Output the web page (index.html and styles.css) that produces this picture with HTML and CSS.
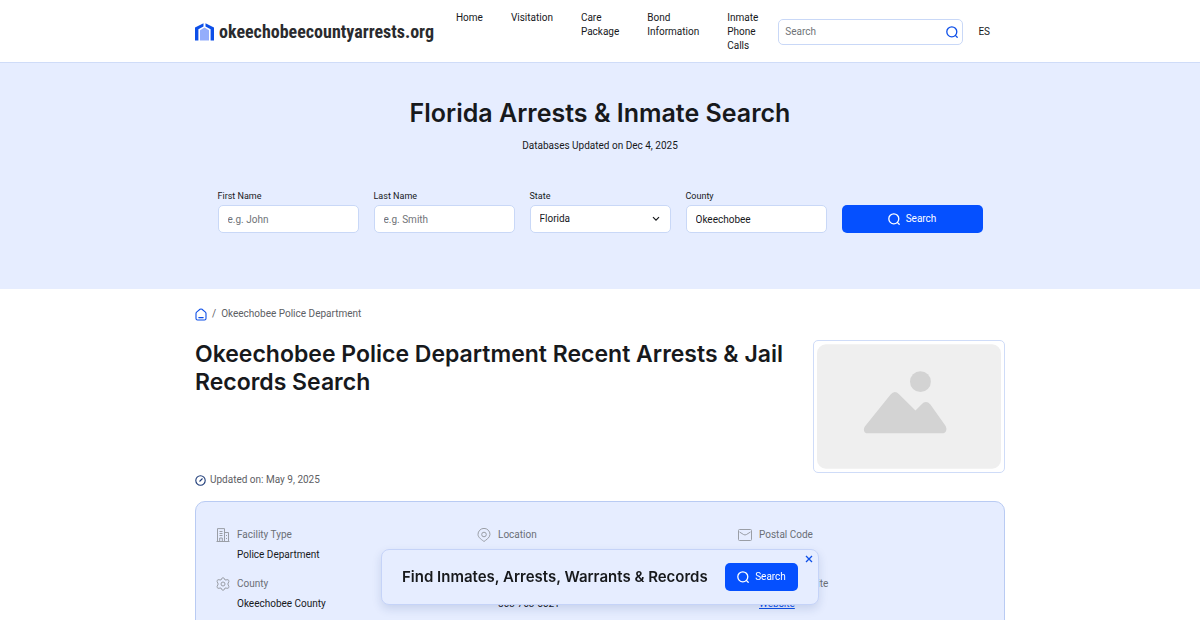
FILE: index.html
```html
<!DOCTYPE html>
<html lang="en">
<head>
    <meta charset="UTF-8">
    <meta name="viewport" content="width=device-width, initial-scale=1.0">
    <title>Okeechobee Police Department Recent Arrests &amp; Jail Records Search</title>
    <link rel="stylesheet" href="styles.css">
</head>
<body>
    <svg class="sprite" aria-hidden="true">
        <symbol id="icon-search" viewBox="0 0 12 12">
            <path d="M9.4 9.4 11.2 11.2M10.8 5.8A5 5 0 1 1 .8 5.8a5 5 0 0 1 10 0Z" fill="none" stroke="currentColor" stroke-width="1.3" stroke-linecap="round"/>
        </symbol>
    </svg>

    <header class="header">
        <div class="container header-inner">
            <a class="logo" href="#">
                <svg class="logo-icon" viewBox="0 0 19 18">
                    <path d="M0 4.5 8.5.3v3.3L3.4 6.3V17.5H0ZM19 4.5 10.5.3v3.3l5.1 2.7v11.2H19Z" fill="#0d4fe8"/>
                    <path d="M5 7.3 9.5 4.5 14 7.3v10.2H5Z" fill="#94adfb"/>
                </svg>
                <span>okeechobeecountyarrests.org</span>
            </a>
            <nav>
                <ul class="nav-list">
                    <li><a href="#">Home</a></li>
                    <li><a href="#">Visitation</a></li>
                    <li><a href="#">Care Package</a></li>
                    <li><a href="#">Bond Information</a></li>
                    <li><a href="#">Inmate Phone Calls</a></li>
                </ul>
            </nav>
            <form class="site-search">
                <input type="text" placeholder="Search" aria-label="Search">
                <button type="submit" aria-label="Search"><svg class="icon-search"><use href="#icon-search"/></svg></button>
            </form>
            <a class="lang" href="#">ES</a>
        </div>
    </header>

    <section class="hero">
        <h2>Florida Arrests &amp; Inmate Search</h2>
        <p>Databases Updated on Dec 4, 2025</p>
        <form class="search-form">
            <div class="field">
                <label for="firstName">First Name</label>
                <input type="text" id="firstName" placeholder="e.g. John">
            </div>
            <div class="field">
                <label for="lastName">Last Name</label>
                <input type="text" id="lastName" placeholder="e.g. Smith">
            </div>
            <div class="field">
                <label for="state">State</label>
                <div class="select-wrap">
                    <select id="state">
                        <option>Florida</option>
                    </select>
                    <svg class="chevron" viewBox="0 0 8 6"><path d="m1 1.2 3 3 3-3" fill="none" stroke="currentColor" stroke-width="1.2"/></svg>
                </div>
            </div>
            <div class="field">
                <label for="county">County</label>
                <input type="text" id="county" value="Okeechobee">
            </div>
            <button class="btn" type="submit"><svg class="icon-search"><use href="#icon-search"/></svg>Search</button>
        </form>
    </section>

    <main class="container">
        <nav class="breadcrumbs" aria-label="Breadcrumb">
            <a href="#" aria-label="Home">
                <svg viewBox="0 0 12 13"><path d="M1 5.4Q1 4.6 1.6 4.1L5 1.3Q6 .6 7 1.3l3.4 2.8q.6.5.6 1.3v5.1Q11 12 9.5 12h-7Q1 12 1 10.5ZM3.8 9.6h4.4" fill="none" stroke="currentColor" stroke-width="1.1" stroke-linecap="round"/></svg>
            </a>
            <span>/</span>
            <span>Okeechobee Police Department</span>
        </nav>

        <div class="facility">
            <div class="facility-text">
                <h1>Okeechobee Police Department Recent Arrests &amp; Jail Records Search</h1>
                <p class="updated">
                    <svg viewBox="0 0 11 11"><circle cx="5.5" cy="5.5" r="4.7"/><path d="M4.5 6.5 7.5 3.5"/></svg>
                    Updated on: May 9, 2025
                </p>
            </div>
            <div class="photo">
                <svg viewBox="0 0 185 125" role="img" aria-label="No photo">
                    <rect width="185" height="125" rx="9" fill="#efefef"/>
                    <circle cx="104" cy="37.5" r="10.5" fill="#d3d3d3"/>
                    <path d="M51 89.5C47 89.5 46 85 48.5 82L74 50.5Q78 45.5 82.5 50.3L99 66.5 105 60.5Q109.5 55.5 114 60.5L129 81.5C131.5 85.5 129.5 89.5 126 89.5Z" fill="#d3d3d3"/>
                </svg>
            </div>
        </div>

        <dl class="details">
            <div class="detail">
                <svg class="detail-icon" viewBox="0 0 14 14"><path d="M.5 13.5h13M1.500 13.500V.6h7v12.9M8.500 4.500h4v9M3.500 3.500h3M3.500 5.500h3M3.500 7.500h3M3.700 13.500V10h2.600v3.500M10.500 7v1M10.500 10v1"/></svg>
                <dt>Facility Type</dt>
                <dd>Police Department</dd>
            </div>
            <div class="detail">
                <svg class="detail-icon" viewBox="0 0 14 14"><path d="M7 13.5C5.5 12.2 1 9.8 1 6.4a6 6 0 0 1 12 0c0 3.4-4.5 5.8-6 7.1Z"/><circle cx="7" cy="6.5" r="2.3"/></svg>
                <dt>Location</dt>
                <dd>Okeechobee</dd>
            </div>
            <div class="detail">
                <svg class="detail-icon" viewBox="0 0 14 14"><rect x=".5" y="1.5" width="13" height="11" rx="1"/><path d="m1.500 4 4.200 2.600q1.300.7 2.600 0L12.500 4"/></svg>
                <dt>Postal Code</dt>
                <dd>34974</dd>
            </div>
            <div class="detail">
                <svg class="detail-icon" viewBox="0 0 14 14"><path d="M7 .7Q8 .7 8.500 2L9 3l3-.3q1.200.6.9 1.800L11.800 7l1.100 2.500q.3 1.200-.9 1.800L9 11l-.5 1q-.5 1.300-1.500 1.300T5.500 12L5 11l-3 .3Q.8 10.700 1.100 9.500L2.200 7 1.100 4.500Q.8 3.300 2 2.700L5 3l.5-1Q6 .7 7 .7Z"/><circle cx="7" cy="7" r="2"/></svg>
                <dt>County</dt>
                <dd>Okeechobee County</dd>
            </div>
            <div class="detail">
                <svg class="detail-icon" viewBox="0 0 14 14"><path d="M2 1.500h2.500l1.200 3-1.500 1.200a8 8 0 0 0 4 4l1.300-1.500 3 1.300V12q-.3 1-1.500 1C6 13 1 8 1 3q0-1.200 1-1.500Z"/></svg>
                <dt>Phone</dt>
                <dd>863-763-5521</dd>
            </div>
            <div class="detail">
                <svg class="detail-icon" viewBox="0 0 14 14"><circle cx="7" cy="7" r="6"/><path d="M1 7h12M7 1q-5 6 0 12 5-6 0-12"/></svg>
                <dt>Official Website</dt>
                <dd><a href="#">Website</a></dd>
            </div>
        </dl>
    </main>

    <aside class="popup">
        <p>Find Inmates, Arrests, Warrants &amp; Records</p>
        <button class="btn" type="button"><svg class="icon-search"><use href="#icon-search"/></svg>Search</button>
        <button class="popup-close" type="button" aria-label="Close">
            <svg viewBox="0 0 8 8"><path d="m1 1 6 6M7 1 1 7" fill="none" stroke="currentColor" stroke-width="1.3"/></svg>
        </button>
    </aside>
</body>
</html>
```
FILE: styles.css
```css
* {
    margin: 0;
    padding: 0;
    box-sizing: border-box;
}

body {
    font-family: Roboto, "Liberation Sans", sans-serif;
    font-size: 10px;
    line-height: 14px;
    color: #17191c;
    background: #fff;
    overflow: hidden;
}

a {
    color: inherit;
    text-decoration: none;
}

input,
select,
button {
    font: inherit;
    color: inherit;
}

svg {
    display: block;
    flex: none;
}

.sprite {
    position: absolute;
    width: 0;
    height: 0;
}

.container {
    max-width: 810px;
    margin: 0 auto;
}

.icon-search {
    width: 12px;
    height: 12px;
}

h1,
h2,
.popup p {
    font-family: Inter, "Liberation Sans", sans-serif;
    font-weight: 600;
}

/* Header */
.header {
    border-bottom: 1px solid #cfdcf8;
}

.header-inner {
    display: flex;
    align-items: center;
    padding: 11px 0 9px;
}

.logo {
    display: flex;
    align-items: center;
    gap: 5px;
    margin-right: 22px;
    color: #2a2b2e;
    font-family: "Roboto Condensed", "Liberation Sans Narrow", "Liberation Sans", sans-serif;
    font-size: 18px;
    font-weight: 700;
    line-height: 24px;
}

.logo-icon {
    width: 19px;
    height: 18px;
}

.header nav {
    align-self: flex-start;
}

.nav-list {
    display: flex;
    gap: 28px;
    list-style: none;
}

.nav-list li {
    width: min-content;
}

.site-search {
    display: flex;
    align-items: center;
    flex: 1;
    height: 26px;
    margin: 0 15px 0 20px;
    padding: 0 4px 0 6px;
    border: 1px solid #c9d8f7;
    border-radius: 5px;
}

.site-search input {
    flex: 1;
    min-width: 0;
    border: 0;
    outline: 0;
    background: none;
}

.site-search button {
    border: 0;
    background: none;
    color: #0d4fe8;
}

.lang {
    margin-right: 15px;
}

/* Search block */
.hero {
    padding: 33px 20px 56px;
    background: #e6edff;
    text-align: center;
}

.hero h2 {
    font-size: 25px;
    line-height: 34px;
}

.hero p {
    margin: 9px 0 36px;
}

.search-form {
    display: flex;
    align-items: flex-end;
    gap: 15px;
    max-width: 765px;
    margin: 0 auto;
    text-align: left;
}

.field,
.search-form .btn {
    flex: 1;
    min-width: 0;
}

.field label {
    display: block;
    margin-bottom: 2px;
    font-size: 9px;
}

.field input,
.field select {
    display: block;
    width: 100%;
    height: 28px;
    padding: 0 9px;
    border: 1px solid #c9d8f7;
    border-radius: 5px;
    background: #fff;
    appearance: none;
}

::placeholder {
    color: #707377;
    opacity: 1;
}

.select-wrap {
    position: relative;
}

.chevron {
    position: absolute;
    top: 11px;
    right: 11px;
    width: 8px;
    height: 6px;
    pointer-events: none;
}

.btn {
    display: flex;
    align-items: center;
    justify-content: center;
    gap: 6px;
    height: 28px;
    border: 0;
    border-radius: 5px;
    background: #0550ff;
    color: #fff;
}

/* Facility */
.breadcrumbs {
    display: flex;
    align-items: center;
    gap: 5px;
    padding: 18px 0 19px;
    color: #5d6064;
}

.breadcrumbs a {
    color: #0d4fe8;
}

.breadcrumbs svg {
    width: 12px;
    height: 13px;
}

.facility {
    display: flex;
    justify-content: space-between;
    gap: 20px;
}

.facility-text {
    display: flex;
    flex-direction: column;
    justify-content: space-between;
    flex: 1;
}

h1 {
    font-size: 23px;
    line-height: 28px;
}

.updated {
    display: flex;
    align-items: center;
    gap: 4px;
    color: #5d6064;
}

.updated svg {
    width: 11px;
    height: 11px;
    fill: none;
    stroke: #1d3b78;
    stroke-width: 1.1;
}

.photo {
    align-self: flex-start;
    margin-bottom: 14px;
    padding: 3px;
    border: 1px solid #cfdcf8;
    border-radius: 5px;
}

.photo svg {
    width: 184px;
    height: 125px;
}

.details {
    display: grid;
    grid-template-columns: repeat(3, 1fr);
    gap: 15px;
    margin-top: 14px;
    padding: 26px 20px;
    border: 1px solid #b9cbf3;
    border-radius: 10px;
    background: #e6edff;
}

.detail {
    display: grid;
    grid-template-columns: 14px 1fr;
    gap: 6px 7px;
}

.detail-icon {
    width: 14px;
    height: 14px;
    fill: none;
    stroke: #9a9ea6;
}

.detail dt {
    color: #6b6f76;
}

.detail dd {
    grid-column: 2;
}

.detail dd a {
    color: #0d4fe8;
    text-decoration: underline;
}

/* Sticky call to action */
.popup {
    position: fixed;
    bottom: 15px;
    left: 50%;
    transform: translateX(-50%);
    display: flex;
    align-items: center;
    justify-content: space-between;
    width: 438px;
    max-width: 100%;
    padding: 13px 20px;
    border: 1px solid #c5d3f8;
    border-radius: 8px;
    background: #e6edff;
    box-shadow: 0 4px 10px rgba(30, 60, 130, 0.15);
}

.popup p {
    font-size: 15px;
    line-height: 20px;
}

.popup .btn {
    width: 73px;
}

.popup-close {
    position: absolute;
    top: 5px;
    right: 5px;
    border: 0;
    background: none;
    color: #0d4fe8;
}

.popup-close svg {
    width: 8px;
    height: 8px;
}
```
